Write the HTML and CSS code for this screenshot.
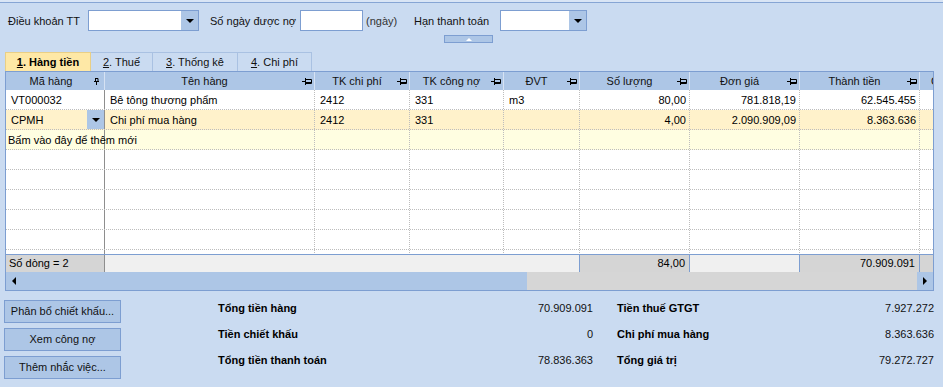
FILE: index.html
```html
<!DOCTYPE html>
<html lang="vi">
<head>
<meta charset="utf-8">
<title>Hàng tiền</title>
<link rel="stylesheet" href="styles.css">
</head>
<body>
<div class="topline"></div>
<div class="fields">
  <span class="lbl l1">Điều khoản TT</span>
  <div class="combo c1"><div class="dd"><span class="tri"></span></div></div>
  <span class="lbl l2">Số ngày được nợ</span>
  <div class="input"></div>
  <span class="lbl l3">(ngày)</span>
  <span class="lbl l4">Hạn thanh toán</span>
  <div class="combo c2"><div class="dd"><span class="tri"></span></div></div>
</div>
<div class="collapse"><span class="tri-up"></span></div>
<div class="tabs">
  <div class="tab t1 active"><u>1</u>. Hàng tiền</div>
  <div class="tab t2"><u>2</u>. Thuế</div>
  <div class="tab t3"><u>3</u>. Thống kê</div>
  <div class="tab t4"><u>4</u>. Chi phí</div>
</div>
<div class="grid">
  <div class="row head">
    <div class="c w1"><span class="ht">Mã hàng</span><svg class="pinv" width="5" height="7" viewBox="0 0 5 7"><path d="M1 0.5H4V3.5M1.5 0.5V3.5M0 3.5H5M2.5 4V7" stroke="#000" fill="none"/></svg></div>
    <div class="c w2"><span class="ht">Tên hàng</span><svg class="pin" width="10" height="7" viewBox="0 0 10 7"><path d="M0 3.5H3M3.5 0V7M4 1.5H9.5V5.5H4M4 4.5H9" stroke="#000" fill="none"/></svg></div>
    <div class="c w3"><span class="ht">TK chi phí</span><svg class="pin" width="10" height="7" viewBox="0 0 10 7"><path d="M0 3.5H3M3.5 0V7M4 1.5H9.5V5.5H4M4 4.5H9" stroke="#000" fill="none"/></svg></div>
    <div class="c w4"><span class="ht">TK công nợ</span><svg class="pin" width="10" height="7" viewBox="0 0 10 7"><path d="M0 3.5H3M3.5 0V7M4 1.5H9.5V5.5H4M4 4.5H9" stroke="#000" fill="none"/></svg></div>
    <div class="c w5"><span class="ht">ĐVT</span><svg class="pin" width="10" height="7" viewBox="0 0 10 7"><path d="M0 3.5H3M3.5 0V7M4 1.5H9.5V5.5H4M4 4.5H9" stroke="#000" fill="none"/></svg></div>
    <div class="c w6"><span class="ht">Số lượng</span><svg class="pin" width="10" height="7" viewBox="0 0 10 7"><path d="M0 3.5H3M3.5 0V7M4 1.5H9.5V5.5H4M4 4.5H9" stroke="#000" fill="none"/></svg></div>
    <div class="c w7"><span class="ht">Đơn giá</span><svg class="pin" width="10" height="7" viewBox="0 0 10 7"><path d="M0 3.5H3M3.5 0V7M4 1.5H9.5V5.5H4M4 4.5H9" stroke="#000" fill="none"/></svg></div>
    <div class="c w8"><span class="ht">Thành tiền</span><svg class="pin" width="10" height="7" viewBox="0 0 10 7"><path d="M0 3.5H3M3.5 0V7M4 1.5H9.5V5.5H4M4 4.5H9" stroke="#000" fill="none"/></svg></div>
    <div class="c w9"><span class="hl">CP</span></div>
  </div>
  <div class="body">
    <div class="row r-data">
      <div class="c w1">VT000032</div><div class="c w2">Bê tông thương phẩm</div><div class="c w3">2412</div><div class="c w4">331</div><div class="c w5">m3</div><div class="c w6 num">80,00</div><div class="c w7 num">781.818,19</div><div class="c w8 num">62.545.455</div><div class="c w9"></div>
    </div>
    <div class="row r-sel">
      <div class="c w1 cbox"><span class="cv">CPMH</span><span class="dd"><span class="tri"></span></span></div><div class="c w2">Chi phí mua hàng</div><div class="c w3">2412</div><div class="c w4">331</div><div class="c w5"></div><div class="c w6 num">4,00</div><div class="c w7 num">2.090.909,09</div><div class="c w8 num">8.363.636</div><div class="c w9"></div>
    </div>
    <div class="row r-new">
      <div class="c w1 newtxt">Bấm vào đây để thêm mới</div><div class="c w2"></div><div class="c w3"></div><div class="c w4"></div><div class="c w5"></div><div class="c w6"></div><div class="c w7"></div><div class="c w8"></div><div class="c w9"></div>
    </div>
    <div class="row"><div class="c w1"></div><div class="c w2"></div><div class="c w3"></div><div class="c w4"></div><div class="c w5"></div><div class="c w6"></div><div class="c w7"></div><div class="c w8"></div><div class="c w9"></div></div>
    <div class="row"><div class="c w1"></div><div class="c w2"></div><div class="c w3"></div><div class="c w4"></div><div class="c w5"></div><div class="c w6"></div><div class="c w7"></div><div class="c w8"></div><div class="c w9"></div></div>
    <div class="row"><div class="c w1"></div><div class="c w2"></div><div class="c w3"></div><div class="c w4"></div><div class="c w5"></div><div class="c w6"></div><div class="c w7"></div><div class="c w8"></div><div class="c w9"></div></div>
    <div class="row"><div class="c w1"></div><div class="c w2"></div><div class="c w3"></div><div class="c w4"></div><div class="c w5"></div><div class="c w6"></div><div class="c w7"></div><div class="c w8"></div><div class="c w9"></div></div>
    <div class="row"><div class="c w1"></div><div class="c w2"></div><div class="c w3"></div><div class="c w4"></div><div class="c w5"></div><div class="c w6"></div><div class="c w7"></div><div class="c w8"></div><div class="c w9"></div></div>
    <div class="row"><div class="c w1"></div><div class="c w2"></div><div class="c w3"></div><div class="c w4"></div><div class="c w5"></div><div class="c w6"></div><div class="c w7"></div><div class="c w8"></div><div class="c w9"></div></div>
  </div>
  <div class="foot">
    <div class="f w1 gray">Số dòng = 2</div>
    <div class="f wm"></div>
    <div class="f w6 gray num">84,00</div>
    <div class="f w7"></div>
    <div class="f w8 gray num">70.909.091</div>
    <div class="f w9 gray"></div>
  </div>
  <div class="hscroll">
    <div class="thumb"><span class="tri-l"></span></div>
    <div class="track"></div>
    <div class="sbtn"><span class="tri-r"></span></div>
  </div>
</div>
<div class="bottom">
  <div class="btns">
    <div class="btn">Phân bổ chiết khấu...</div>
    <div class="btn">Xem công nợ</div>
    <div class="btn">Thêm nhắc việc...</div>
  </div>
  <div class="tot tot1">
    <span class="tl">Tổng tiền hàng</span><span class="tv">70.909.091</span>
    <span class="tl">Tiền chiết khấu</span><span class="tv">0</span>
    <span class="tl">Tổng tiền thanh toán</span><span class="tv">78.836.363</span>
  </div>
  <div class="tot tot2">
    <span class="tl">Tiền thuế GTGT</span><span class="tv">7.927.272</span>
    <span class="tl">Chi phí mua hàng</span><span class="tv">8.363.636</span>
    <span class="tl">Tổng giá trị</span><span class="tv">79.272.727</span>
  </div>
</div>
</body>
</html>
```

FILE: styles.css
```css
html, body {
  margin: 0;
  padding: 0;
}
body {
  width: 943px;
  height: 387px;
  overflow: hidden;
  background: #cadbf1;
  font-family: "Liberation Sans", Arial, sans-serif;
  font-size: 11px;
  color: #000;
}

.topline {
  height: 2px;
  background: #d9e5f5;
  border-bottom: 1px solid #86a5d4;
}

/* field row */
.fields {
  display: flex;
  align-items: center;
  height: 21px;
  margin-top: 7px;
  padding-left: 8px;
}
.lbl { white-space: nowrap; color: #111; }
.l1 { width: 80px; }
.l2 { width: 90px; margin-left: 11px; }
.l3 { width: 48px; padding-left: 3px; color: #333; }
.l4 { width: 86px; }
.combo {
  box-sizing: border-box;
  height: 21px;
  border: 1px solid #7d9ed1;
  background: #fff;
  display: flex;
  justify-content: flex-end;
}
.c1 { width: 111px; }
.c2 { width: 87px; }
.dd {
  width: 17px;
  background: #adc6e6;
  display: flex;
  align-items: center;
  justify-content: center;
}
.tri {
  width: 0;
  height: 0;
  border-left: 4px solid transparent;
  border-right: 4px solid transparent;
  border-top: 4px solid #000;
}
.input {
  box-sizing: border-box;
  width: 63px;
  height: 21px;
  border: 1px solid #7d9ed1;
  background: #fff;
}

.collapse {
  box-sizing: border-box;
  width: 49px;
  height: 8px;
  margin: 4px 0 0 444px;
  border: 1px solid #7d9ed1;
  background: #adc6e6;
  display: flex;
  align-items: center;
  justify-content: center;
}
.tri-up {
  width: 0;
  height: 0;
  border-left: 3px solid transparent;
  border-right: 3px solid transparent;
  border-bottom: 3px solid #fff;
}

/* tabs */
.tabs {
  display: flex;
  height: 19px;
  margin-top: 9px;
  padding-left: 5px;
}
.tab {
  box-sizing: border-box;
  height: 19px;
  border: 1px solid #a9c1e2;
  border-bottom: none;
  border-left: none;
  display: flex;
  align-items: center;
  justify-content: center;
  color: #111;
  white-space: nowrap;
}
.t1 { width: 86px; border-left: 1px solid #a9c1e2; }
.t2 { width: 62px; }
.t3 { width: 85px; }
.t4 { width: 74px; }
.tab.active {
  background: #fee8a6;
  border-color: #e9cf86;
  font-weight: bold;
  color: #000;
}

/* grid */
.grid {
  box-sizing: border-box;
  width: 929px;
  height: 220px;
  margin-left: 5px;
  border: 1px solid #7d9ed1;
  overflow: hidden;
  background: #fff;
}
.row {
  display: flex;
  box-sizing: border-box;
  height: 20px;
  border-bottom: 1px dotted #bdbdbd;
  white-space: nowrap;
}
.c {
  box-sizing: border-box;
  flex: none;
  height: 100%;
  border-right: 1px dotted #bdbdbd;
  padding: 0 5px;
  line-height: 21px;
  overflow: visible;
}
.w1 { width: 99px; border-right: 1px solid #8e8e8e; }
.w2 { width: 210px; }
.w3 { width: 95px; }
.w4 { width: 94px; }
.w5 { width: 76px; }
.w6 { width: 110px; }
.w7 { width: 110px; }
.w8 { width: 120px; }
.w9 { width: 100px; }
.wm { width: 475px; }
.num { text-align: right; padding-right: 3px; }

.head {
  height: 18px;
  background: #adc6e6;
  border-bottom: none;
}
.head .c {
  display: flex;
  align-items: center;
  padding: 0 2px 0 0;
  border-right: 1px solid #d6e2f3;
  line-height: 18px;
}
.head .ht { flex: 1; text-align: center; padding-left: 2px; color: #111; }
.head .hl { padding-left: 11px; color: #111; }
.pin { flex: none; }
.pinv { flex: none; margin-right: 3px; }

.body {
  height: 164px;
  overflow: hidden;
}
.r-sel { background: #fff2cb; }
.r-new { background: #fffee1; }
.cbox {
  display: flex;
  padding: 0;
}
.cbox .cv { flex: 1; padding-left: 5px; }
.cbox .dd { width: 17px; height: 19px; }
.newtxt { padding-left: 2px; }

.foot {
  display: flex;
  box-sizing: border-box;
  height: 18px;
  border-top: 1px solid #7d9ed1;
  background: #f0f0f0;
  white-space: nowrap;
}
.f {
  box-sizing: border-box;
  flex: none;
  height: 100%;
  border-right: 1px solid #7d9ed1;
  padding: 0 3px;
  line-height: 17px;
}
.foot .w1 { border-right: 1px solid #8e8e8e; }
.foot .num { padding-right: 4px; }
.gray { background: #d5d5d5; }

.hscroll {
  display: flex;
  height: 18px;
}
.thumb {
  width: 521px;
  background: #adc6e6;
  display: flex;
  align-items: center;
  padding-left: 6px;
  box-sizing: border-box;
}
.track { flex: 1; background: #d6d6d6; }
.sbtn {
  width: 16px;
  background: #adc6e6;
  display: flex;
  align-items: center;
  justify-content: center;
}
.tri-l {
  width: 0;
  height: 0;
  border-top: 4px solid transparent;
  border-bottom: 4px solid transparent;
  border-right: 4px solid #000;
}
.tri-r {
  width: 0;
  height: 0;
  border-top: 4px solid transparent;
  border-bottom: 4px solid transparent;
  border-left: 4px solid #000;
}

/* bottom */
.bottom {
  display: flex;
  align-items: flex-start;
  margin-top: 4px;
}
.btns {
  display: flex;
  flex-direction: column;
  gap: 5px;
  width: 117px;
  margin: 5px 0 0 4px;
}
.btn {
  box-sizing: border-box;
  height: 23px;
  border: 1px solid #7d9ed1;
  background: #adc6e6;
  text-align: center;
  line-height: 21px;
  color: #111;
  white-space: nowrap;
}
.tot {
  display: grid;
  grid-template-columns: 1fr auto;
  grid-auto-rows: 26px;
  align-items: center;
}
.tot1 { width: 375px; margin-left: 97px; }
.tot2 { width: 317px; margin-left: 24px; }
.tl { font-weight: bold; color: #000; white-space: nowrap; }
.tv { text-align: right; color: #111; }
```
